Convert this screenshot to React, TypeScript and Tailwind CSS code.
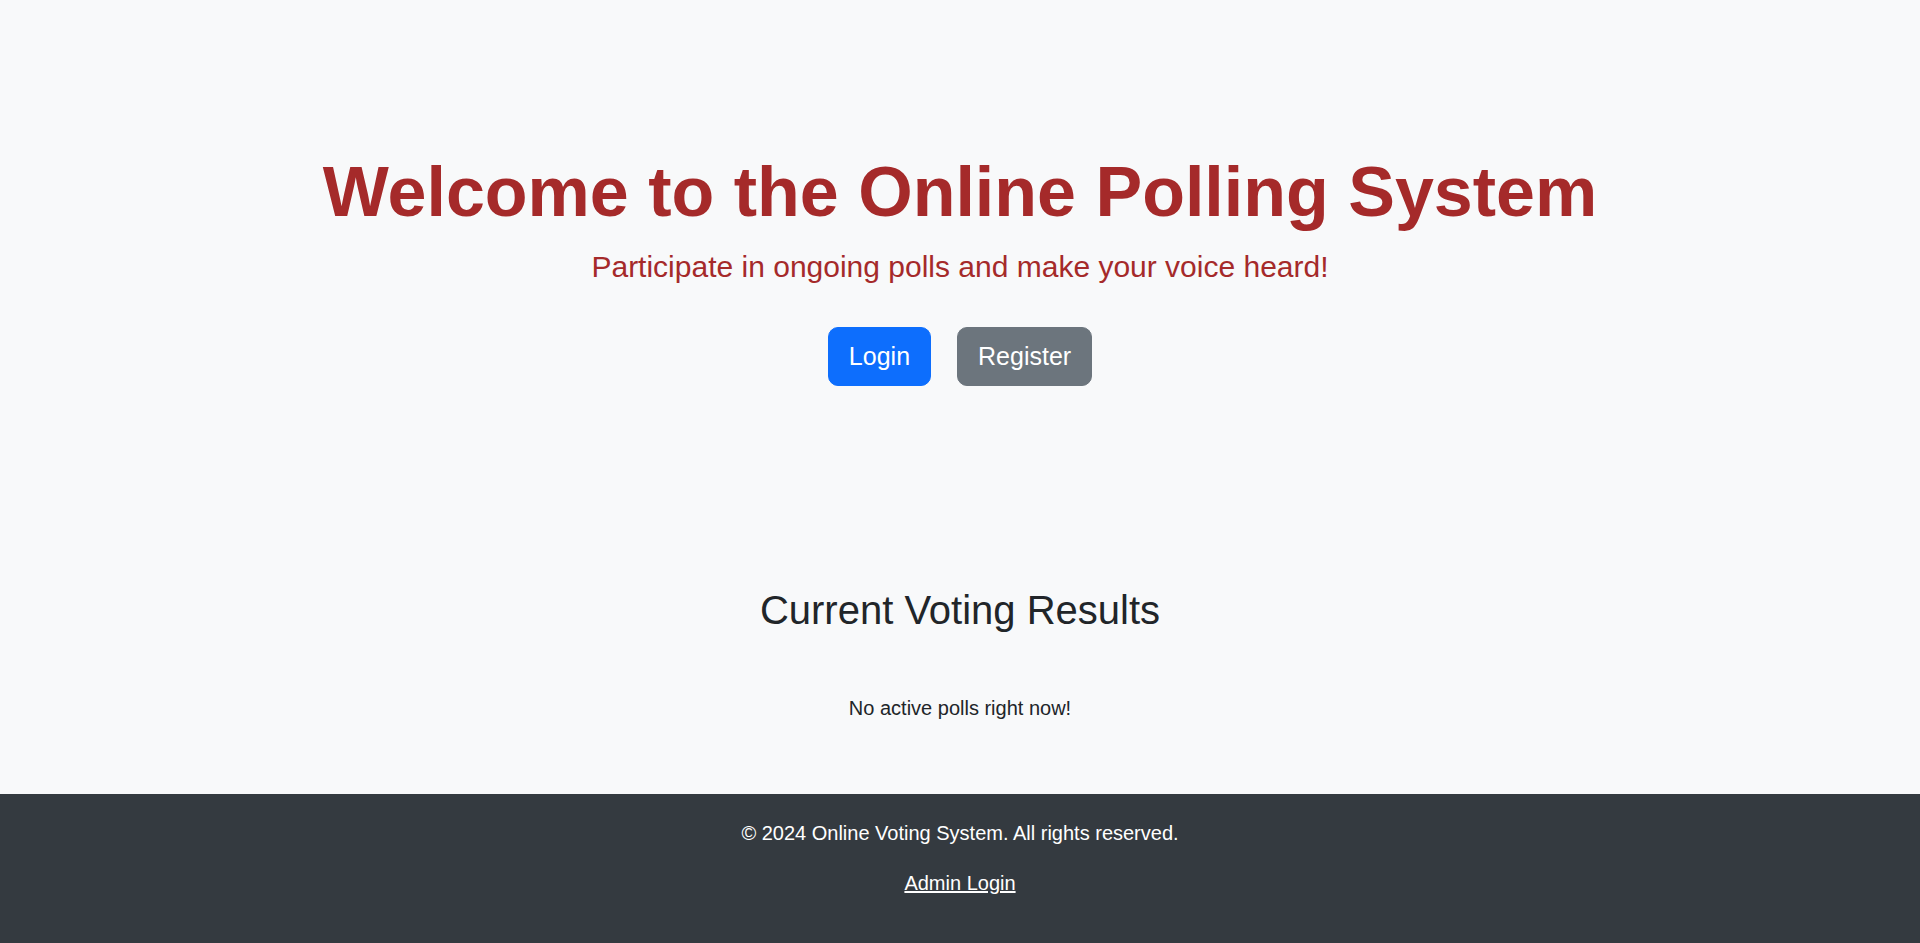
import React from "react";

export default function App() {
  return (
    <div className="min-h-screen flex flex-col bg-[#f8f9fa] text-[#212529] font-['Liberation_Sans',Arial,Helvetica,sans-serif]">
      <main className="flex-1 text-center">
        <section className="pt-[150px]">
          <h1 className="text-[70px] leading-[84px] font-bold text-[#a52a2a] mb-[10px]">
            Welcome to the Online Polling System
          </h1>
          <p className="text-[30px] leading-[45px] text-[#a52a2a]">
            Participate in ongoing polls and make your voice heard!
          </p>
          <div className="mt-[38px] flex justify-center gap-[26px]">
            <a
              href="#"
              className="h-[59px] px-[20px] flex items-center text-[25px] text-white bg-[#0d6efd] border border-[#0d6efd] rounded-[10px]"
            >
              Login
            </a>
            <a
              href="#"
              className="h-[59px] px-[20px] flex items-center text-[25px] text-white bg-[#6c757d] border border-[#6c757d] rounded-[10px]"
            >
              Register
            </a>
          </div>
        </section>
        <section className="mt-[200px]">
          <h2 className="text-[40px] leading-[48px] font-normal">Current Voting Results</h2>
          <p className="mt-[59px] text-[20px] leading-[30px]">No active polls right now!</p>
        </section>
      </main>
      <footer className="bg-[#343a40] text-white text-center h-[149px] pt-[24px] text-[20px] leading-[30px]">
        <p>© 2024 Online Voting System. All rights reserved.</p>
        <p className="mt-[20px]">
          <a href="#" className="text-white underline">
            Admin Login
          </a>
        </p>
      </footer>
    </div>
  );
}
